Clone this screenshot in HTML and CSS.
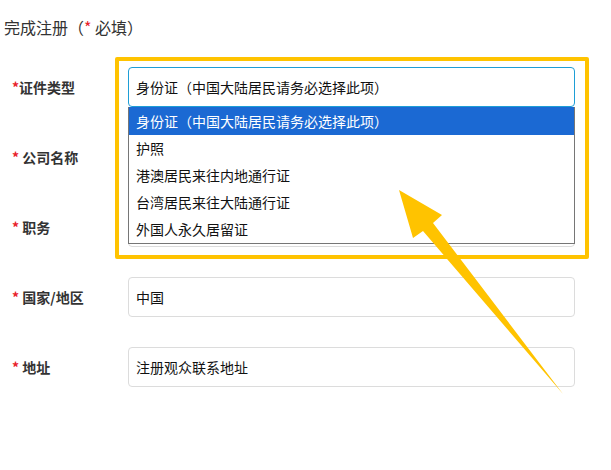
FILE: index.html
```html
<!DOCTYPE html>
<html lang="zh">
<head>
<meta charset="utf-8">
<link rel="stylesheet" href="styles.css">
</head>
<body>
<div class="page">
  <div class="title">完成注册（<span class="req">*</span> 必填）</div>
  <div class="form">
    <div class="row">
      <div class="label"><span class="req">*</span>证件类型</div>
      <div class="field">
        <div class="select">身份证（中国大陆居民请务必选择此项）</div>
        <ul class="list">
          <li class="opt sel">身份证（中国大陆居民请务必选择此项）</li>
          <li class="opt">护照</li>
          <li class="opt">港澳居民来往内地通行证</li>
          <li class="opt">台湾居民来往大陆通行证</li>
          <li class="opt">外国人永久居留证</li>
        </ul>
      </div>
    </div>
    <div class="row">
      <div class="label"><span class="req">*</span> 公司名称</div>
      <div class="field"><div class="input"></div></div>
    </div>
    <div class="row">
      <div class="label"><span class="req">*</span> 职务</div>
      <div class="field"><div class="input"></div></div>
    </div>
    <div class="row">
      <div class="label"><span class="req">*</span> 国家/地区</div>
      <div class="field"><div class="input">中国</div></div>
    </div>
    <div class="row">
      <div class="label"><span class="req">*</span> 地址</div>
      <div class="field"><div class="input">注册观众联系地址</div></div>
    </div>
  </div>
  <div class="highlight"></div>
  <svg class="arrow" width="611" height="470" viewBox="0 0 611 470">
    <polygon points="399,190 442,215 433,223 563,394 423,231 413,238" fill="#ffc300"/>
  </svg>
</div>
</body>
</html>
```
FILE: styles.css
```css
* { box-sizing: border-box; }
html, body { margin: 0; padding: 0; background: #fff; }
body {
  font-family: "Noto Sans CJK SC", "Noto Sans", sans-serif;
  color: #222;
  width: 611px;
  height: 470px;
  overflow: hidden;
}
.page { position: relative; width: 611px; height: 470px; }
.title {
  padding: 16px 0 0 4px;
  font-size: 16px;
  line-height: 22px;
  height: 67px;
  color: #333;
}
.req { color: #e8202a; }
.form { display: flex; flex-direction: column; gap: 30px; }
.row { display: flex; align-items: center; height: 40px; }
.label {
  width: 128px;
  padding-left: 12px;
  font-size: 14px;
  font-weight: bold;
  color: #333;
}
.field { position: relative; width: 447px; height: 40px; }
.input, .select {
  height: 40px;
  border: 1px solid #dcdcdc;
  border-radius: 4px;
  padding: 0 7px;
  font-size: 14px;
  line-height: 38px;
  color: #111;
}
.select { border-color: #1e9ed6; }
.list {
  position: absolute;
  left: 0; top: 40px;
  width: 447px;
  margin: 0; padding: 0;
  list-style: none;
  background: #fff;
  border: 1px solid #767676;
  border-top: none;
  z-index: 2;
}
.opt {
  height: 27px;
  line-height: 27px;
  padding-left: 7px;
  font-size: 14px;
  color: #111;
}
.opt.sel { background: #1b69d3; color: #fff; height: 28px; line-height: 28px; }
.highlight {
  position: absolute;
  left: 115px; top: 57px;
  width: 474px; height: 202px;
  border: 4px solid #ffc300;
  border-radius: 2px;
  z-index: 3;
}
.arrow { position: absolute; left: 0; top: 0; z-index: 4; }
```
